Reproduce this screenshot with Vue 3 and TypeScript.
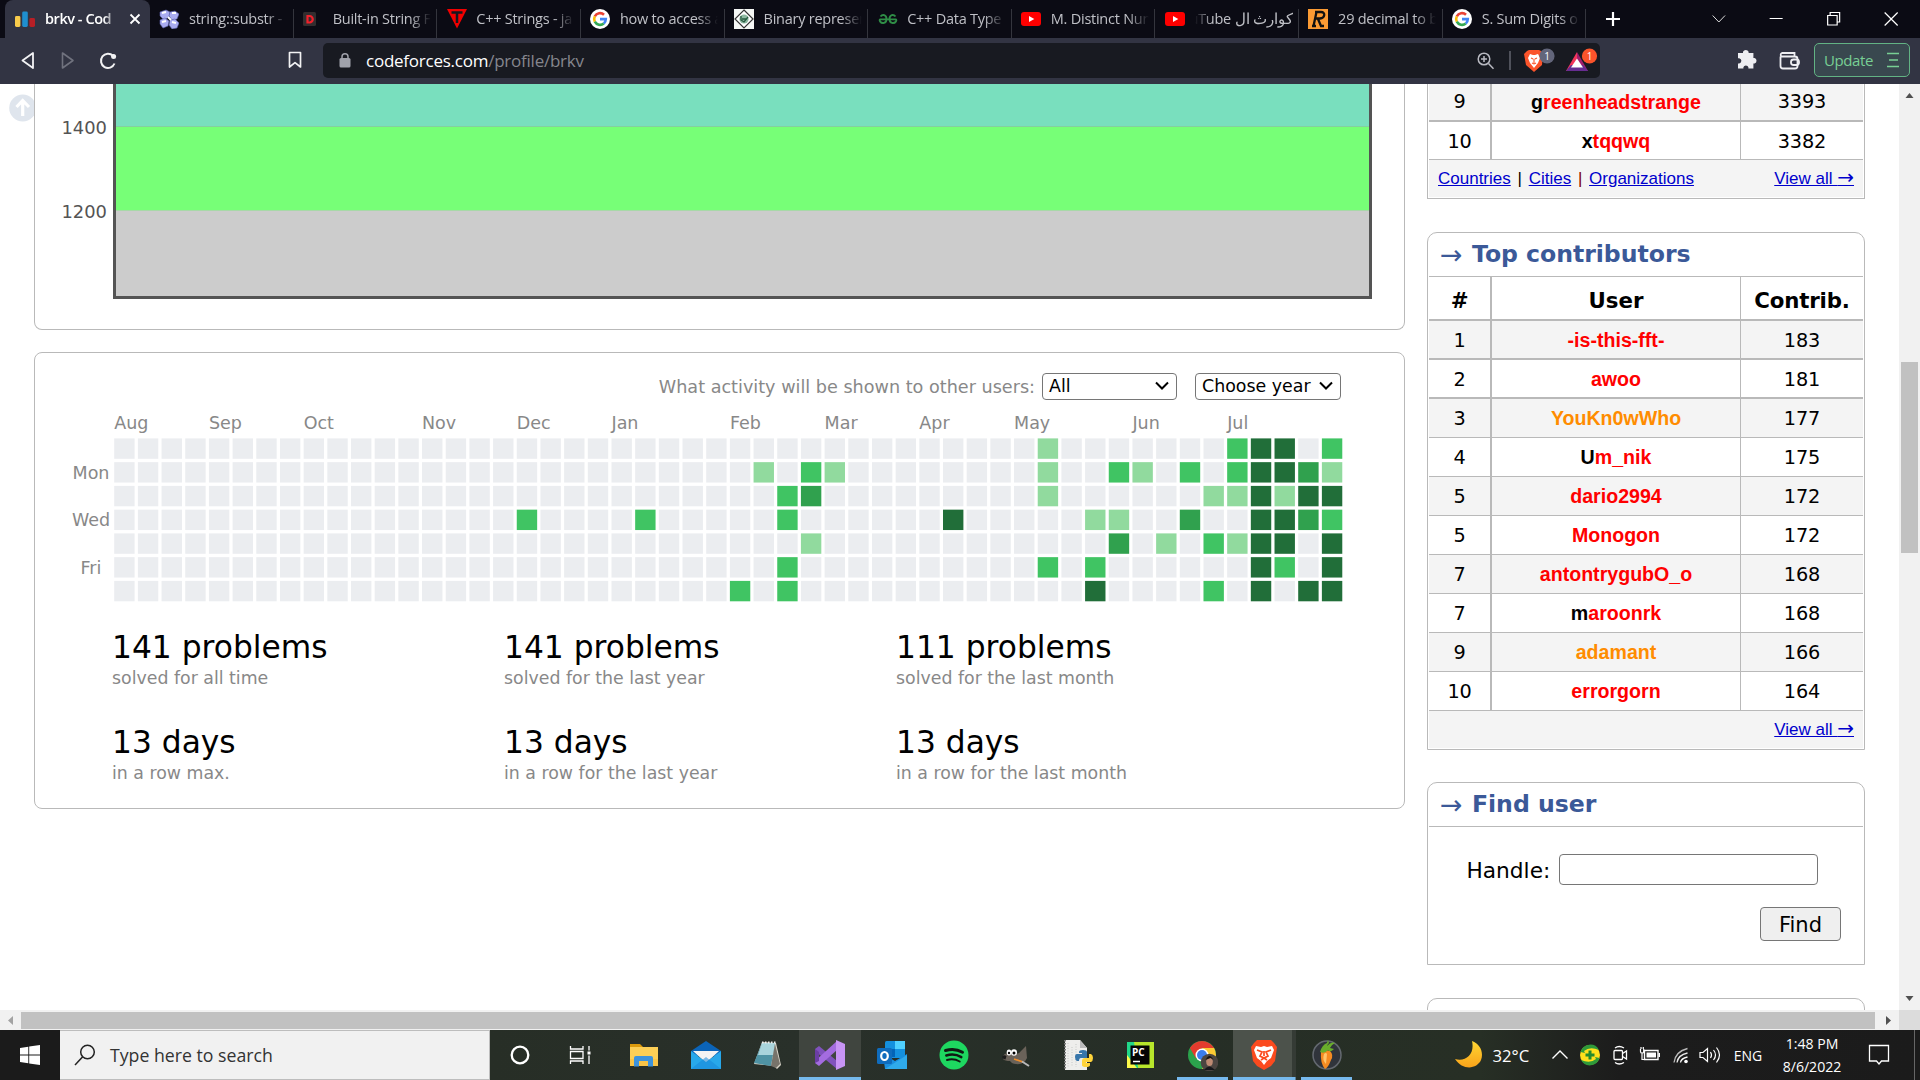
<script setup lang="ts">
interface Tab {
  icon: string
  title: string
  rtl?: boolean
}
interface Row {
  rank: number
  first?: string
  name: string
  tone: 'red' | 'orange'
  value: number
  thick?: boolean
}

const tabs: Tab[] = [
  { icon: 'cpp', title: 'string::substr -' },
  { icon: 'd', title: 'Built-in String F' },
  { icon: 't', title: 'C++ Strings - ja' },
  { icon: 'google', title: 'how to access a' },
  { icon: 'binary', title: 'Binary represen' },
  { icon: 'gfg', title: 'C++ Data Type' },
  { icon: 'yt', title: 'M. Distinct Nun' },
  { icon: 'yt', title: 'كوارث ال uTube', rtl: true },
  { icon: 'r', title: '29 decimal to b' },
  { icon: 'google', title: 'S. Sum Digits o' },
]

const topRated: Row[] = [
  { rank: 9, first: 'g', name: 'reenheadstrange', tone: 'red', value: 3393, thick: true },
  { rank: 10, first: 'x', name: 'tqqwq', tone: 'red', value: 3382 },
]
const contributors: Row[] = [
  { rank: 1, name: '-is-this-fft-', tone: 'red', value: 183, thick: true },
  { rank: 2, name: 'awoo', tone: 'red', value: 181, thick: true },
  { rank: 3, name: 'YouKn0wWho', tone: 'orange', value: 177 },
  { rank: 4, first: 'U', name: 'm_nik', tone: 'red', value: 175 },
  { rank: 5, name: 'dario2994', tone: 'red', value: 172 },
  { rank: 5, name: 'Monogon', tone: 'red', value: 172 },
  { rank: 7, name: 'antontrygubO_o', tone: 'red', value: 168 },
  { rank: 7, first: 'm', name: 'aroonrk', tone: 'red', value: 168 },
  { rank: 9, name: 'adamant', tone: 'orange', value: 166 },
  { rank: 10, name: 'errorgorn', tone: 'red', value: 164 },
]

const step = 23.68
const months: [string, number][] = [
  ['Aug', 0], ['Sep', 4], ['Oct', 8], ['Nov', 13], ['Dec', 17], ['Jan', 21],
  ['Feb', 26], ['Mar', 30], ['Apr', 34], ['May', 38], ['Jun', 43], ['Jul', 47],
]
const shades = ['#ebedf0', '#91da9e', '#40c463', '#30a14e', '#216e39']
const activity: Record<number, number>[] = [
  { 39: 1, 47: 2, 48: 4, 49: 4, 51: 2 },
  { 27: 1, 29: 2, 30: 1, 39: 1, 42: 2, 43: 1, 45: 2, 47: 2, 48: 4, 49: 4, 50: 3, 51: 1 },
  { 28: 2, 29: 3, 39: 1, 46: 1, 47: 1, 48: 4, 49: 1, 50: 4, 51: 4 },
  { 17: 2, 22: 2, 28: 2, 35: 4, 41: 1, 42: 1, 45: 3, 48: 4, 49: 4, 50: 3, 51: 2 },
  { 29: 1, 42: 3, 44: 1, 46: 2, 47: 1, 48: 4, 49: 4, 51: 4 },
  { 28: 2, 39: 2, 41: 2, 48: 4, 49: 2, 51: 4 },
  { 26: 2, 28: 2, 41: 4, 46: 2, 48: 4, 50: 4, 51: 4 },
]
const cells = activity.flatMap((row, r) =>
  Array.from({ length: 52 }, (_, c) => ({
    key: `${r}-${c}`,
    x: 79.2 + c * step,
    y: 27.4 + r * 23.75,
    fill: shades[row[c] ?? 0],
  })),
)

const stats = [
  ['141 problems', 'solved for all time'],
  ['141 problems', 'solved for the last year'],
  ['111 problems', 'solved for the last month'],
  ['13 days', 'in a row max.'],
  ['13 days', 'in a row for the last year'],
  ['13 days', 'in a row for the last month'],
]
</script>

<template>
  <div class="screen">
    <header class="tabs">
      <div class="tab active">
        <svg class="fav" viewBox="0 0 20 20"><rect x="0" y="7" width="5.4" height="11" rx="1.4" fill="#f8cb4b" /><rect x="7.2" y="2.6" width="5.6" height="15.4" rx="1.4" fill="#1f8fcf" /><rect x="14.4" y="9" width="5.6" height="9" rx="1.4" fill="#b71f26" /></svg>
        <span class="tab-title">brkv - Cod</span>
        <svg class="close" viewBox="0 0 12 12"><path d="M1.5 1.5l9 9M10.5 1.5l-9 9" stroke="#fff" stroke-width="1.8" /></svg>
      </div>
      <div v-for="(t, i) in tabs" :key="i" class="tab">
        <svg v-if="t.icon === 'cpp'" class="fav" viewBox="0 0 20 20"><g fill="#a9acf0" stroke="#5a5fa8" stroke-width=".6"><path d="M1 3l6-2 4 2-1 5-5 3-4-4z" /><path d="M11 3l5-1 4 3-2 5-5 1-3-4z" /><path d="M1 11l5-2 4 3-1 5-5 2-3-4z" /><path d="M11 11l5-1 4 4-2 5-5 1-3-4z" /></g><path d="M3 4l4-1M13 4l4 0M3 13l4-1M13 13l4 1M9 8l3 3" stroke="#fff" stroke-width="2" /></svg>
        <svg v-else-if="t.icon === 'd'" class="fav" viewBox="0 0 20 20"><rect x="0" y="3" width="13" height="14" rx="1.5" fill="#332d2f" /><path d="M4.500 7h2a3 3 0 0 1 0 6.500h-2z" fill="none" stroke="#f2202b" stroke-width="2.2" /></svg>
        <svg v-else-if="t.icon === 't'" class="fav" viewBox="0 0 20 20"><path d="M0 0h20l-10 19.500z" fill="#f20000" /><path d="M4.500 3.400h11M10 3v11" stroke="#17171f" stroke-width="2.500" /></svg>
        <svg v-else-if="t.icon === 'google'" class="fav" viewBox="0 0 20 20"><circle cx="10" cy="10" r="10" fill="#fff" /><g fill="none" stroke-width="2.6"><path d="M14 5.700A5.900 5.900 0 0 0 4.800 7.300" stroke="#ea4335" /><path d="M4.800 7.300a6 6 0 0 0 0 5.400" stroke="#fbbc05" /><path d="M4.800 12.700a5.900 5.900 0 0 0 9 1.800" stroke="#34a853" /><path d="M13.800 14.500a5.800 5.800 0 0 0 2-4.400H10" stroke="#4285f4" /></g></svg>
        <svg v-else-if="t.icon === 'binary'" class="fav" viewBox="0 0 20 20"><path d="M0 0h20v20H0z" fill="#f5f7f5" /><path d="M10 1l9 9-9 9-9-9z" fill="#fff" stroke="#333" stroke-width="1.2" /><circle cx="10" cy="10" r="4.600" fill="#8db8a0" /><path d="M7 7v4l3 2 4-5M8 10h5" stroke="#285b42" stroke-width="1.300" fill="none" /></svg>
        <svg v-else-if="t.icon === 'gfg'" class="fav" viewBox="0 0 20 20"><g fill="none" stroke="#2f8d46" stroke-width="1.900"><path d="M2.500 7.500c2-2.500 6-2 6 2.500s-4.500 5-6.300 2.600C1.300 11.400 1.700 10.400 2 10.400h16c.3 0 .7 1-.2 2.200-1.800 2.400-6.300 1.900-6.300-2.600s4-5 6-2.500" /></g></svg>
        <svg v-else-if="t.icon === 'yt'" class="fav" viewBox="0 0 20 20"><rect y="3" width="20" height="14" rx="3" fill="#f00" /><path d="M8 7l5.300 3L8 13z" fill="#fff" /></svg>
        <svg v-else class="fav" viewBox="0 0 20 20"><path d="M0 0h20v20H0z" fill="#fb9a33" /><path d="M7 3h6c5 0 4 6-1 6.500H8M8.500 3L5.500 17M4 17h4M10 10l3 7h3" stroke="#111" stroke-width="2.300" fill="none" /></svg>
        <span class="tab-title" :class="{ rtl: t.rtl }" :dir="t.rtl ? 'rtl' : 'ltr'">{{ t.title }}</span>
      </div>
      <svg class="newtab" viewBox="0 0 16 16"><path d="M8 1v14M1 8h14" stroke="#fff" stroke-width="2.200" /></svg>
      <div class="winctl">
        <svg viewBox="0 0 57 38"><path d="M22.500 15.500l6.200 6.500 6.200-6.500" stroke="#ddd" fill="none" /></svg>
        <svg viewBox="0 0 57 38"><path d="M22.500 18.500h13" stroke="#fff" /></svg>
        <svg viewBox="0 0 57 38"><path d="M23.500 15.500h9.500v9.500h-9.500zM26 15v-2.500h9.500V22h-2.500" stroke="#fff" fill="none" stroke-width="1.200" /></svg>
        <svg viewBox="0 0 57 38"><path d="M22.500 12.500l13 13M35.500 12.500l-13 13" stroke="#fff" stroke-width="1.200" /></svg>
      </div>
    </header>

    <div class="toolbar">
      <svg class="nav" viewBox="0 0 323 46"><g fill="none" stroke-linejoin="round"><path d="M33 15v15l-10.500-7.500z" stroke="#f2f2f4" stroke-width="1.800" /><path d="M62.500 15v15L73 22.500z" stroke="#70727e" stroke-width="1.600" /><path d="M114.500 25.500A7 7.200 0 1 1 113 17.800" stroke="#f2f2f4" stroke-width="2" /><path d="M289.500 14.500h11V29l-5.500-4.300-5.500 4.300z" stroke="#f2f2f4" stroke-width="1.700" /></g><circle cx="113.600" cy="18.500" r="2.500" fill="#f2f2f4" /></svg>
      <div class="url">
        <svg class="lock" viewBox="0 0 12 15"><rect x=".5" y="5" width="11" height="9.500" rx="1.500" fill="#a0a2ab" /><path d="M3 6V3.800a3 3 0 0 1 6 0V6" fill="none" stroke="#a0a2ab" stroke-width="1.500" /></svg>
        <span class="addr"><b>codeforces.com</b>/profile/brkv</span>
        <svg class="extras" viewBox="0 0 130 35"><g fill="none" stroke="#b9bac2" stroke-width="1.500"><circle cx="14" cy="16" r="5.800" /><path d="M18.500 20.500l5 5.200M11 16h6M14 13v6" /></g><path d="M40 8v19" stroke="#62646e" stroke-width="1.500" /><path d="M57 8l2-1h10l2 1 2 3-1 11-8 7-8-7-2-11z" fill="#fb542b" /><path d="M60 11l3 1h2l3-1 2 4-2 5-4 5-4-5-2-5z" fill="#fff" /><path d="M61 15l2.200 1M67 15l-2.200 1M62 20l2 1 2-1M64 16v4" stroke="#fb542b" fill="none" stroke-width="1.100" /><path d="M107 9L96 28h11z" fill="#f2355b" /><path d="M107 9l11 19h-11z" fill="#a01f6d" /><path d="M96 28h22l-5-6h-12z" fill="#662d91" /><path d="M107 15.500l-6 9h12z" fill="#fff" /><circle cx="77" cy="13" r="7.600" fill="#62657a" /><circle cx="119.500" cy="13" r="7.600" fill="#fb542b" /><text x="77" y="16.500" class="badge">1</text><text x="119.500" y="16.500" class="badge">1</text></svg>
      </div>
      <svg class="actions" viewBox="0 0 110 46"><path d="M2 16.500h5v-1.200a3 3 0 0 1 5.600 0v1.200h4.800v5h1.200a3 3 0 0 1 0 5.600h-1.200v4.900h-5v-1.200a2.600 2.600 0 0 0-5 0V32H2v-5h1.200a2.700 2.700 0 0 0 0-5.300H2z" fill="#eeeef2" transform="translate(0 -1.500)" /><g fill="none" stroke="#eeeef2" stroke-width="1.800"><path d="M60.500 18.500V28a2.500 2.500 0 0 0 2.500 2.500h12A2.500 2.500 0 0 0 77.500 28v-7a2.500 2.500 0 0 0-2.500-2.500H61.500a2 2 0 0 1 .5-3.500h12.500v3" transform="translate(-16)" /><rect x="55" y="21.500" width="8" height="5.500" rx="2.500" /></g></svg>
      <div class="update"><span>Update</span><svg viewBox="0 0 12 16"><path d="M0 1.500h12M2 8h9M0 14.500h12" stroke="#78cf94" stroke-width="1.500" /></svg></div>
    </div>

    <main class="viewport">
      <div class="page">
        <svg class="totop" viewBox="0 0 25 28"><circle cx="13.700" cy="14" r="13.500" fill="#dfe5ed" /><path d="M13.700 22V7M7.500 13l6.200-6.500L20 13" stroke="#fff" stroke-width="3.200" fill="none" /></svg>
        <section class="left">
          <div class="panel chart">
            <div class="ylabels"><span>1400</span><span>1200</span></div>
            <div class="plot"><i class="b1400" /><i class="b1200" /><i class="b0" /></div>
          </div>
          <div class="panel act">
            <div class="controls">
              <span>What activity will be shown to other users:</span>
              <div class="select all">All<svg viewBox="0 0 14 10"><path d="M1 1.500l6 6 6-6" /></svg></div>
              <div class="select year">Choose year<svg viewBox="0 0 14 10"><path d="M1 1.500l6 6 6-6" /></svg></div>
            </div>
            <svg class="heat" width="1368" height="196" viewBox="0 0 1368 196">
              <text v-for="m in months" :key="m[0]" :x="79.200 + m[1] * step" y="18">{{ m[0] }}</text>
              <text x="56" y="67.500" class="mid">Mon</text>
              <text x="56" y="114.500" class="mid">Wed</text>
              <text x="56" y="162.500" class="mid">Fri</text>
              <rect v-for="c in cells" :key="c.key" :x="c.x" :y="c.y" width="20.400" height="20.400" :fill="c.fill" />
            </svg>
            <div class="stats">
              <div v-for="(s, i) in stats" :key="i" class="stat"><strong>{{ s[0] }}</strong><small>{{ s[1] }}</small></div>
            </div>
          </div>
        </section>

        <aside class="side">
          <div class="box rated">
            <div v-for="(r, i) in topRated" :key="i" class="row" :class="{ thick: r.thick, odd: i % 2 === 0 }">
              <span class="n">{{ r.rank }}</span><span class="u" :class="r.tone"><em>{{ r.first }}</em>{{ r.name }}</span><span class="v">{{ r.value }}</span>
            </div>
            <div class="foot"><span class="links"><a>Countries</a> <i>|</i> <a>Cities</a> <i class="dark">|</i> <a>Organizations</a></span><a>View all <b>→</b></a></div>
          </div>
          <div class="box contrib">
            <h2><span>→</span>Top contributors</h2>
            <div class="row head thick"><span class="n">#</span><span class="u">User</span><span class="v">Contrib.</span></div>
            <div v-for="(r, i) in contributors" :key="i" class="row" :class="{ thick: r.thick, odd: i % 2 === 0 }">
              <span class="n">{{ r.rank }}</span><span class="u" :class="r.tone"><em v-if="r.first">{{ r.first }}</em>{{ r.name }}</span><span class="v">{{ r.value }}</span>
            </div>
            <div class="foot"><span /><a>View all <b>→</b></a></div>
          </div>
          <div class="box find">
            <h2><span>→</span>Find user</h2>
            <div class="handle"><label>Handle:</label><input type="text" /></div>
            <button>Find</button>
          </div>
          <div class="box next" />
        </aside>
      </div>
      <div class="vscroll"><svg viewBox="0 0 8 5"><path d="M0 5L4 0l4 5z" /></svg><div class="vthumb" /><svg class="down" viewBox="0 0 8 5"><path d="M0 0l4 5 4-5z" /></svg></div>
    </main>
    <div class="hscroll"><svg viewBox="0 0 5 9"><path d="M5 0v9L0 4.500z" fill="#a3a3a3" /></svg><div class="hthumb" /><svg viewBox="0 0 5 9"><path d="M0 0v9l5-4.500z" fill="#505050" /></svg><div class="corner" /></div>

    <footer class="taskbar">
      <div class="start"><svg width="20" height="20" viewBox="0 0 20 20"><path d="M0 3l8.300-1.200v7.700H0zM9.200 1.600L20 0v9.500H9.200zM0 10.400h8.300v7.800L0 17zM9.200 10.400H20V20L9.200 18.400z" fill="#fff" /></svg></div>
      <div class="search"><svg width="22" height="22" viewBox="0 0 22 22"><circle cx="13.500" cy="8" r="6.800" fill="none" stroke="#222" stroke-width="1.500" /><path d="M8.700 12.800L1 21" stroke="#222" stroke-width="1.500" /></svg><span>Type here to search</span></div>
      <div class="slot small"><svg viewBox="0 0 32 32"><circle cx="16" cy="16" r="8.300" fill="none" stroke="#fff" stroke-width="2.300" /></svg></div>
      <div class="slot small"><svg viewBox="0 0 32 32"><path d="M6.500 7v3h12.500V7M6.500 25v-3h12.500v3M6.500 12.500h12.500v7H6.500zM25 7v4.500M25 16.500V25" fill="none" stroke="#fff" stroke-width="1.300" /><path d="M23.500 12.500h3v3h-3z" fill="#fff" /></svg></div>
      <div class="slot gap"><svg viewBox="0 0 32 32"><path d="M2 5h10l3 3H2z" fill="#dc9a0c" /><path d="M2 8h28v19H2z" fill="#fdcf56" /><path d="M2 20h28v7H2z" fill="#f9c447" /><path d="M6 27.500V19q0-2 2-2h15q2 0 2 2v8.500h-5V22h-9v5.500z" fill="#3d93dc" /></svg></div>
      <div class="slot"><svg viewBox="0 0 32 32"><path d="M1 12L16 2l15 10v5H1z" fill="#0b64b8" /><path d="M3 12h26L16 24z" fill="#f3f3f3" /><path d="M1 12l15 11 15-11v18H1z" fill="#28a8ea" /><path d="M1 30l15-12 15 12z" fill="#1787d8" opacity=".55" /></svg></div>
      <div class="slot"><svg viewBox="0 0 32 32"><path d="M10 3l14 1 5 22-4 4-3-3L2 25z" fill="#d8d4c8" /><path d="M10 4h13l-4 23-17-3z" fill="#4f93a4" /><path d="M10 4h13l-2 12-15 0z" fill="#a9d4dc" /><path d="M23 5l5 20-4 4-5-2z" fill="#77736a" /><path d="M10 3.500h14" stroke="#eee" stroke-width="2" stroke-dasharray="1.500 1.500" /></svg></div>
      <div class="slot on"><svg viewBox="0 0 32 32"><path d="M1 10l4-3 18 15v8L1 12z" fill="#8052bd" /><path d="M1 24l4 3L23 11V2L1 22z" fill="#a46ce0" /><path d="M1 10l4 3v9l-4 2z" fill="#6b3da3" /><path d="M22 1l9 4v22l-9 4z" fill="#c894f5" /></svg></div>
      <div class="slot"><svg viewBox="0 0 32 32"><rect x="9" y="2" width="20" height="17" rx="1.500" fill="#1490df" /><path d="M19 2h10v8H19z" fill="#50d0ff" /><path d="M9 10h10v8H9z" fill="#0364b8" /><path d="M7 15l12 7 12-7v15H9z" fill="#1a8fe0" /><path d="M9 30l22-14v14z" fill="#39b5ef" opacity=".7" /><rect x="1" y="9" width="15" height="16" rx="1.500" fill="#0f6cbd" /><ellipse cx="8.500" cy="17" rx="3.300" ry="4" fill="none" stroke="#fff" stroke-width="2.200" /></svg></div>
      <div class="slot"><svg viewBox="0 0 32 32"><circle cx="16" cy="16" r="14.500" fill="#1ed760" /><g fill="none" stroke="#101812" stroke-linecap="round"><path d="M7.500 11.500c6-1.800 12-1.200 17 1.700" stroke-width="3" /><path d="M8.300 16.500c5-1.500 10.500-1 15 1.600" stroke-width="2.500" /><path d="M9 21c4.500-1.200 8.700-.8 12.700 1.500" stroke-width="2" /></g></svg></div>
      <div class="slot"><svg viewBox="0 0 32 32"><path d="M3 17q2-4 8-2 8 1 10-3 3-3 5-5l1 12q-3 7-11 6-4 0-6-3-5 0-7-2z" fill="#6a6259" /><path d="M2.500 17q2-1.500 4 0l-1 3.500q-4-1-3-3.500z" fill="#1c1c1c" /><ellipse cx="9" cy="13.500" rx="2.300" ry="3" fill="#fff" /><ellipse cx="14" cy="13.500" rx="3" ry="3.300" fill="#fff" /><circle cx="9" cy="14" r="1.200" /><circle cx="14" cy="14" r="1.500" /><path d="M14 20l9 3" stroke="#ef8f2c" stroke-width="1.800" /><path d="M22 22.500l7 4.500" stroke="#b9b9b9" stroke-width="2" /></svg></div>
      <div class="slot"><svg viewBox="0 0 32 32"><path d="M3 1h15l7 8v22H3z" fill="#eeeeec" /><path d="M18 1v8h7" fill="#bbb" /><path d="M6 4v25M10 8v20M14 5v23" stroke="#c6c8c6" stroke-dasharray="1 1.500" /><path d="M3 1v30" stroke="#777" stroke-dasharray="1.500 1.500" stroke-width="2" /><path d="M17 13q0-2 4-2t4 2v6h-6q-2 0-2 3h-2q-2-1-2-4t2-3h5v-1h-3z" fill="#3776ab" /><path d="M27 15h2q2 1 2 4t-2 4h-5v1h4v2q0 2-4 2t-4-2v-4q0-3 3-3h4z" fill="#ffd43b" /></svg></div>
      <div class="slot"><svg viewBox="0 0 32 32"><path d="M3 3h20l7 6v20H3z" fill="#21d789" /><path d="M10 3h20v26H14z" fill="#b7e62b" /><path d="M3 16l10 13H3z" fill="#fcf84a" /><rect x="6.500" y="6.500" width="19" height="19" fill="#050505" /><text x="8" y="17" class="pc">PC</text><path d="M9 22.500h7" stroke="#fff" stroke-width="1.500" /></svg></div>
      <div class="slot run"><svg viewBox="0 0 32 32"><circle cx="16" cy="16" r="14" fill="#2ba24c" /><path d="M3.900 9A14 14 0 0 1 28.100 9H16L10 19.500z" fill="#e33b2e" /><path d="M28.100 9A14 14 0 0 1 16 30l6-10.500L16 9z" fill="#fcc934" /><circle cx="16" cy="16" r="6.500" fill="#fff" /><circle cx="16" cy="16" r="5" fill="#3b7ded" /><circle cx="23.500" cy="23.500" r="8.800" fill="#4b4541" /><path d="M18 31q5-7 11 0" fill="#17171b" /><ellipse cx="23.500" cy="22.500" rx="3.300" ry="4.500" fill="#bd8a72" /><path d="M19.500 21q4-8 8 0l-3-2z" fill="#171310" /></svg></div>
      <div class="slot on bright"><svg viewBox="0 0 32 32"><path d="M6 4l3-3h14l3 3 3 4-2 14-4 5-7 4-7-4-4-5L3 8z" fill="#fb4a1e" /><path d="M8 7l5 1 3-1 3 1 5-1 2 4-3 8-4 3-3 4-3-4-4-3-3-8z" fill="#fff" /><path d="M9 11l5 2-2 4 4 2 4-2-2-4 5-2M16 12v5M13 21l3-2 3 2" stroke="#fb4a1e" stroke-width="1.700" fill="none" /></svg></div>
      <div class="slot run"><svg viewBox="0 0 32 32"><circle cx="16" cy="16" r="14" fill="#30343b" stroke="#646970" stroke-width="1.500" /><path d="M10 13q4-3 9-1 4 4 1 9-3 8-6 9-5-6-4-17z" fill="#f58b22" /><path d="M13 15q2-2 3 0l-1 10q-4-4-2-10z" fill="#ffc56b" /><path d="M9 13q2-7 7-9l1-3 1 3q-2 2-2 3 4-5 8-3-4 2-5 5l4 1q-4 4-6 1-3 4-8 2z" fill="#69ad2c" /></svg></div>
      <div class="tray">
        <div class="moon"><svg width="28" height="30" viewBox="0 0 28 30"><defs><linearGradient id="mg" x1="0" y1="0" x2="0" y2="1"><stop offset="0" stop-color="#ffd633" /><stop offset="1" stop-color="#f9a31a" /></linearGradient></defs><path d="M17 1c8 3 12 11 9 19-4 9-18 11-26-1 11 3 20-5 17-18z" fill="url(#mg)" /></svg></div>
        <div class="temp">32°C</div>
        <svg class="ti" viewBox="0 0 30 30"><path d="M7.500 18.500L15 11l7.500 7.500" stroke="#fff" fill="none" stroke-width="1.400" /></svg>
        <svg class="ti" viewBox="0 0 30 30"><circle cx="15" cy="15" r="10" fill="#ffe01c" /><path d="M5.500 12A10 10 0 0 1 24 10q-9-4-15 1l1 2zM24.500 18A10 10 0 0 1 6 20q9 4 15-1l-1-2z" fill="#2f9a3a" /><path d="M15 10.500v9M10.500 15h9" stroke="#258a2e" stroke-width="3" /></svg>
        <svg class="ti" viewBox="0 0 30 30"><g fill="none" stroke="#fff" stroke-width="1.300"><rect x="9" y="10.500" width="8.500" height="9" rx="1" /><path d="M17.500 13.500l4-2.500v8l-4-2.500M10 8q4-3 9 0M10 22.500q4 3 9 0" /></g></svg>
        <svg class="ti" viewBox="0 0 30 30"><path d="M9.500 10.500h13.500v9H9.500z" fill="none" stroke="#fff" stroke-width="1.400" /><path d="M11.500 12.500h9.500v5h-9.500zM23.500 13h1.500v4h-1.500z" fill="#fff" /><path d="M5.500 9v2.500a1.600 1.600 0 0 0 3.200 0V9M7 13.500v6h4M6 7v2M8.300 7v2" stroke="#fff" fill="none" stroke-width="1.200" /></svg>
        <svg class="ti" viewBox="0 0 30 30"><g fill="none" stroke="#fff" stroke-width="1.300"><path d="M15.500 22.500q.5-4 7-5.500" /><path d="M12 22.500q1-7.500 10.500-9.500" opacity=".9" /><path d="M9 22.500Q10.500 11.500 22.500 8.500" opacity=".7" /></g><circle cx="21" cy="21.500" r="1.800" fill="#fff" /></svg>
        <svg class="ti" viewBox="0 0 30 30"><g fill="none" stroke="#fff" stroke-width="1.200"><path d="M5 12.500h3l4.500-4v13l-4.500-4H5zM15.500 12q2 3 0 6M18.500 10q4 5 0 10M21.500 7.500q6 7.500 0 15" /></g></svg>
        <div class="lang">ENG</div>
        <div class="clock"><span>1:48 PM</span><span>8/6/2022</span></div>
        <div class="notif"><svg width="22" height="22" viewBox="0 0 22 22"><path d="M1.500 1.500h19v15.500h-7L11 20l-2.500-3h-7z" fill="none" stroke="#fff" stroke-width="1.300" /></svg></div>
        <div class="peek" />
      </div>
    </footer>
  </div>
</template>

<style>
html, body { margin: 0; overflow: hidden; background: #fff; }
</style>

<style scoped>
* { box-sizing: border-box; }
svg { display: block; flex: none; }
.screen { width: 1920px; height: 1080px; display: flex; flex-direction: column; overflow: hidden; font-family: 'DejaVu Sans', Verdana, sans-serif; color: #000; }
.tabs { height: 38px; flex: none; display: flex; background: #0b0b14; padding-left: 5px; font: 14.5px 'Open Sans', sans-serif; letter-spacing: -.25px; color: #bfc0c6; }
.tab { width: 143.65px; flex: none; display: flex; align-items: center; padding-left: 9.300px; gap: 9.700px; background: linear-gradient(#34353d, #34353d) right bottom / 1px 29px no-repeat; }
.tab.active { width: 145px; padding-left: 10px; gap: 10px; background: #323443; border-radius: 8px 8px 0 0; color: #fff; font-weight: 600; letter-spacing: -.45px; }
.fav { width: 20px; height: 20px; }
.tab-title { width: 99px; flex: none; white-space: nowrap; line-height: 24px; -webkit-mask-image: linear-gradient(90deg, #000 78%, transparent 99%); mask-image: linear-gradient(90deg, #000 78%, transparent 99%); }
.tab-title.rtl { -webkit-mask-image: linear-gradient(270deg, #000 82%, transparent 99%); mask-image: linear-gradient(270deg, #000 82%, transparent 99%); }
.active .tab-title { width: 75px; }
.close { width: 12px; height: 12px; margin-left: -1px; }
.newtab { width: 16px; height: 16px; align-self: center; margin-left: 19px; }
.winctl { display: flex; margin-left: auto; margin-right: 1px; }
.winctl svg { width: 57.300px; height: 38px; }

.toolbar { height: 46px; flex: none; display: flex; background: #323443; font-family: 'Open Sans', sans-serif; }
.nav { width: 323px; height: 46px; }
.url { width: 1277px; height: 35px; margin-top: 5px; border-radius: 5px; background: #181a21; display: flex; align-items: center; padding-left: 16px; }
.lock { width: 12px; height: 15px; }
.addr { margin-left: 15px; font-size: 17px; letter-spacing: -.24px; color: #85868d; flex: 1; line-height: 33px; }
.addr b { font-weight: 400; color: #fff; }
.extras { width: 130px; height: 35px; }
.badge { font: 10px 'Open Sans', sans-serif; fill: #fff; text-anchor: middle; }
.actions { width: 110px; height: 46px; margin-left: 136px; }
.update { width: 96px; height: 34px; margin: 5px 0 0 -32px; border: 1px solid #62b384; border-radius: 5px; background: #39484f; color: #78cf94; font-size: 15px; display: flex; align-items: center; padding: 0 10px 0 9px; justify-content: space-between; }
.update span { letter-spacing: -.4px; }
.update svg { width: 12px; height: 16px; }

.viewport { height: 926px; flex: none; display: flex; overflow: hidden; background: #fff; }
.page { width: 1899px; height: 926px; display: flex; position: relative; padding-left: 34px; }
.totop { position: absolute; left: 9px; top: 10px; width: 25px; height: 28px; }
.left { width: 1371px; }
.panel { border: 1px solid #b9b9b9; border-radius: 8px; }
.chart { height: 246px; border-top: 0; border-radius: 0 0 8px 8px; display: flex; }
.ylabels { width: 78px; flex: none; display: flex; flex-direction: column; gap: 62px; padding: 33px 6px 0 0; text-align: right; color: #545454; font-size: 17.900px; line-height: 22px; }
.plot { width: 1259px; height: 215px; border: solid #545454; border-width: 0 3px 3px; display: flex; flex-direction: column; }
.plot i { display: block; }
.b1400 { height: 43px; background: #79dfbe; border-bottom: 1px solid #84cfa0; }
.b1200 { height: 84px; background: #77ff77; border-bottom: 1px solid #a8d8a8; }
.b0 { flex: 1; background: #ccc; }
.act { height: 457px; margin-top: 22px; }
.controls { height: 58px; display: flex; align-items: center; justify-content: flex-end; padding: 8px 63px 0 0; color: #888; font-size: 17.630px; }
.controls > span { margin-right: 7px; padding-top: 2px; }
.select { height: 27px; border: 1px solid #767676; border-radius: 4px; background: #fff; color: #000; display: flex; align-items: center; justify-content: space-between; padding: 0 7px 0 6px; font-size: 17.400px; line-height: 27px; white-space: nowrap; }
.select svg { width: 14px; height: 10px; fill: none; stroke: #000; stroke-width: 2; }
.all { width: 135px; margin-right: 18px; }
.year { width: 146px; }
.heat text { font-size: 17.500px; fill: #888; }
.heat .mid { text-anchor: middle; }
.stats { display: grid; grid-template-columns: 392px 392px 392px; grid-auto-rows: 95px; padding: 21px 0 0 77px; }
.stat { display: flex; flex-direction: column; }
.stat strong { font-weight: 400; font-size: 31.300px; line-height: 38px; }
.stat small { color: #888; font-size: 17.350px; line-height: 24px; }

.side { width: 438px; margin-left: 22px; }
.box { border: 1px solid #b9b9b9; padding: 1px; border-radius: 10px 10px 0 0; width: 438px; }
.rated { height: 115px; border-top: 0; padding-top: 0; border-radius: 0; }
.contrib { height: 518px; margin-top: 33px; padding-top: 0; }
.find { height: 183px; margin-top: 32px; padding-top: 0; }
.next { height: 60px; margin-top: 33px; }
.row { height: 39px; display: grid; grid-template-columns: 63px 249px 1fr; border-bottom: 1px solid #b9b9b9; font-size: 19.300px; text-align: center; line-height: 38px; }
.rated .row:first-child { height: 38px; line-height: 36px; }
.rated .row:nth-child(2) { height: 38px; line-height: 37px; }
.row.thick { border-bottom-width: 2px; }
.odd { background: #f4f4f4; }
.n, .v { padding-top: 1px; overflow: hidden; letter-spacing: -.15px; }
.n { border-right: 2px solid #b9b9b9; }
.rated .row:first-child .n, .rated .row:first-child .v { padding-top: 0; }
.u { border-right: 1px solid #b9b9b9; font: bold 19.600px/39px 'Liberation Sans', Arial, sans-serif; overflow: hidden; }
.rated .row:first-child .u { line-height: 37px; }
.u em { font-style: normal; color: #000; }
.red { color: #f00; }
.orange { color: #ff8c00; }
.head { height: 44px; line-height: 45px; font-weight: 700; font-size: 21.300px; }
.head .u { font: bold 21.300px/47px 'DejaVu Sans', Verdana, sans-serif; }
.foot { height: 37px; background: #f4f4f4; display: flex; justify-content: space-between; padding: 0 9px; font: 17px/38px 'Liberation Sans', Arial, sans-serif; overflow: hidden; }
.foot a { color: #0000cc; text-decoration: underline; }
.foot b { font: 20px/20px 'DejaVu Sans', sans-serif; }
.foot i { font-style: normal; margin: 0 2px; }
.dark { color: #800000; }
h2 { margin: 0; height: 44px; border-bottom: 1px solid #b9b9b9; padding-left: 11px; display: flex; gap: 9px; font: bold 23.600px/42px 'DejaVu Sans', Verdana, sans-serif; letter-spacing: -.04px; color: #3b5998; }
h2 span { width: 23px; font: 27px/44px 'DejaVu Sans', sans-serif; letter-spacing: 0; }
.handle { display: flex; align-items: center; margin: 27px 0 0 37.500px; font-size: 21.700px; gap: 9px; height: 31px; }
.handle label { padding-top: 1px; }
.handle input { width: 259px; height: 31px; border: 1px solid #767676; border-radius: 4px; background: #fff; padding: 0; }
.find button { display: block; width: 81px; height: 34px; margin: 22px 0 0 331px; border: 1px solid #767676; border-radius: 4px; background: #efefef; font: 21px/30px 'DejaVu Sans', Verdana, sans-serif; padding: 2px 0 0; color: #000; }
.vscroll { width: 21px; height: 926px; background: #f1f1f1; display: flex; flex-direction: column; align-items: center; padding-top: 9px; }
.vscroll svg { width: 9px; height: 5px; fill: #505050; }
.vthumb { width: 17px; height: 191px; margin-top: 264px; background: #c1c1c1; }
.down { margin-top: auto; margin-bottom: 9px; }
.hscroll { height: 20px; flex: none; background: #f1f1f1; display: flex; align-items: center; padding-left: 8px; }
.hscroll svg { width: 5px; height: 9px; }
.hthumb { width: 1854px; height: 17px; margin: 1px 11px 0 8px; background: #c1c1c1; flex: none; }
.corner { width: 21px; height: 20px; margin-left: auto; background: #dcdcdc; }

.taskbar { height: 50px; flex: none; display: flex; background: linear-gradient(90deg, #272e26 490px, #29302a 800px, #262e26 1180px, #272f25 1480px, #1c1c1c 1620px, #1b1b1b 1920px); color: #fff; font-family: 'Open Sans', sans-serif; }
.start { width: 60px; flex: none; background: #1b1b1b; display: flex; align-items: center; justify-content: center; }
.search { width: 430px; flex: none; background: #f1f1f1; border: 1px solid #bdbdbd; border-left: 0; display: flex; align-items: center; padding-left: 14px; gap: 14px; font-size: 17.700px; color: #333; }
.slot { width: 62.050px; flex: none; display: flex; align-items: center; justify-content: center; background-repeat: no-repeat; }
.slot.small { width: 60px; }
.slot svg { width: 32px; height: 32px; }
.gap { margin-left: 3px; }
.on { background: linear-gradient(#76b9ed, #76b9ed) bottom / 100% 3px no-repeat, #40453f; }
.bright { background: linear-gradient(#76b9ed, #76b9ed) bottom / 100% 3px no-repeat, linear-gradient(90deg, #4c524b 93%, #353b35 93%); background-repeat: no-repeat; }
.run { background-image: linear-gradient(#76b9ed, #76b9ed); background-size: 51px 3px; background-position: center bottom; }
.pc { font: bold 10px 'Open Sans', sans-serif; fill: #fff; }
.tray { display: flex; align-items: center; margin-left: auto; height: 50px; }
.moon { width: 34px; display: flex; justify-content: center; }
.temp { width: 59px; padding: 1px 0 0 6.500px; font-size: 16.700px; }
.ti { width: 30px; height: 30px; }
.lang { width: 46px; text-align: center; font-size: 14px; }
.clock { width: 82px; display: flex; flex-direction: column; text-align: center; font-size: 14.100px; line-height: 23px; margin-top: -1px; }
.notif { width: 52px; display: flex; justify-content: center; }
.peek { width: 15px; height: 50px; background: linear-gradient(#666, #666) 9px 0 / 1px 50px no-repeat; }
</style>
